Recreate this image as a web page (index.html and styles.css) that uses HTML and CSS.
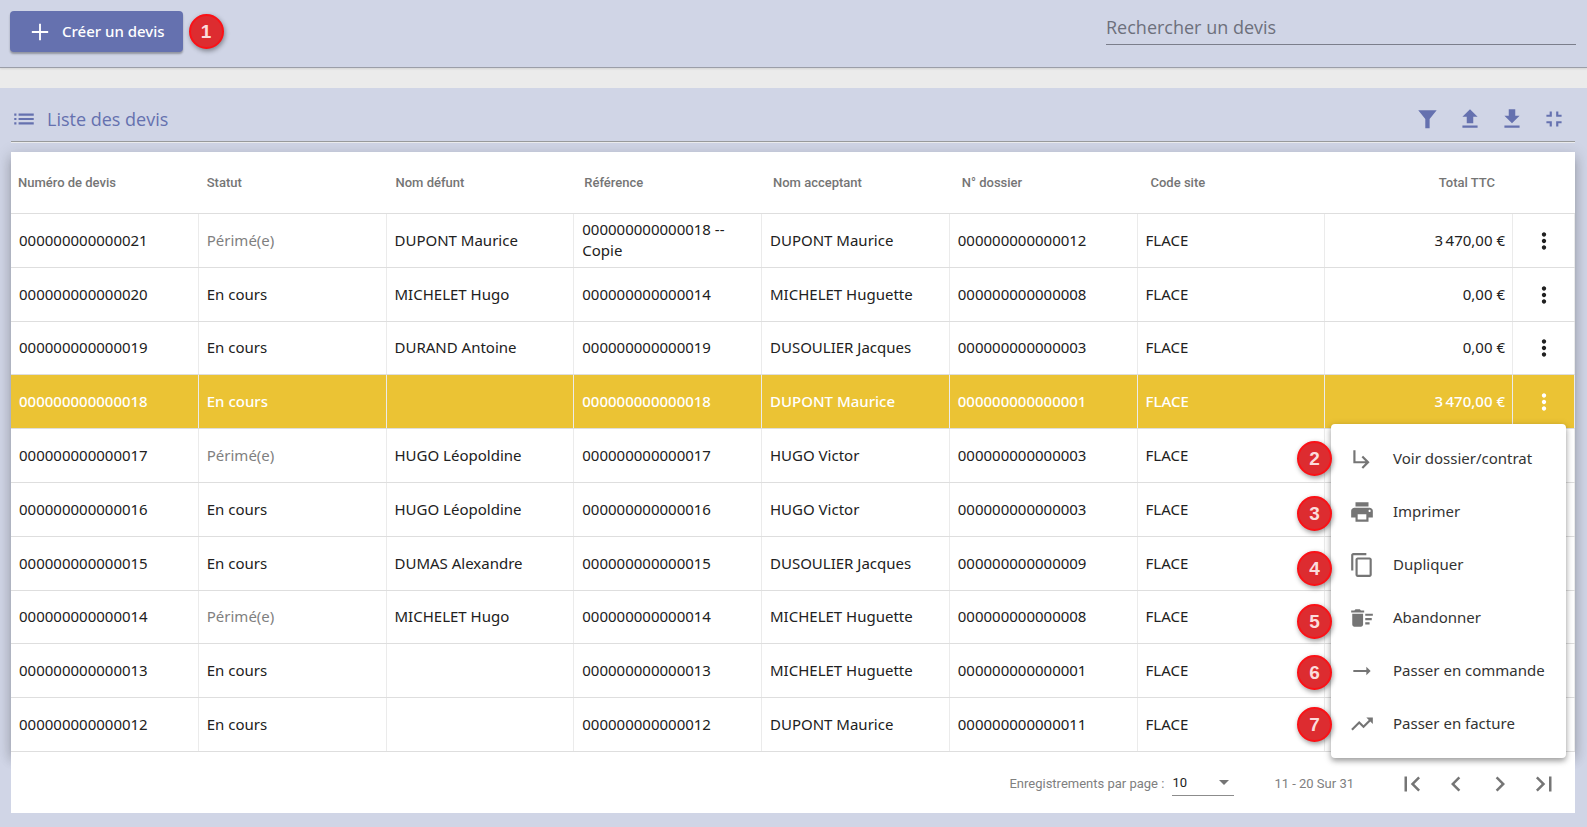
FILE: index.html
```
<!DOCTYPE html>
<html lang="fr">
<head>
  <meta charset="UTF-8">
  <meta name="viewport" content="width=device-width, initial-scale=1.0">
  <title>Liste des devis</title>
  <link rel="stylesheet" href="styles.css">
</head>
<body>

  <!-- Icônes -->
  <svg class="icon-defs" aria-hidden="true">
    <symbol id="i-more" viewBox="0 0 24 24"><path d="M12 8c1.100 0 2-.9 2-2s-.9-2-2-2-2 .9-2 2 .9 2 2 2zm0 2c-1.100 0-2 .9-2 2s.9 2 2 2 2-.9 2-2-.9-2-2-2zm0 6c-1.100 0-2 .9-2 2s.9 2 2 2 2-.9 2-2-.9-2-2-2z"/></symbol>
  </svg>

  <!-- Barre du haut -->
  <header class="topbar">
    <button type="button" class="create-button">
      <svg class="icon-plus" viewBox="0 0 24 24"><path d="M19 12.800h-6.200V19h-1.600v-6.200H5v-1.600h6.200V5h1.600v6.200H19z"/></svg>
      Créer un devis
    </button>
    <span class="badge">1</span>
    <input type="search" class="search" placeholder="Rechercher un devis" aria-label="Rechercher un devis">
  </header>

  <!-- Liste -->
  <main class="panel">
    <div class="panel-header">
      <svg class="icon" viewBox="0 0 24 24"><path d="M3 13h2v-2H3v2zm0 4h2v-2H3v2zm0-8h2V7H3v2zm4 4h14v-2H7v2zm0 4h14v-2H7v2zM7 7v2h14V7H7z"/></svg>
      <h1>Liste des devis</h1>
      <div class="tools">
        <button type="button" aria-label="Filtrer"><svg class="icon" viewBox="0 0 24 24"><path d="M3 4h17l-6.500 8v8.500h-4V12z"/></svg></button>
        <button type="button" aria-label="Importer"><svg class="icon" viewBox="0 0 24 24"><path d="M9 16h6v-6h4l-7-7-7 7h4v6zm-4 2h14v2H5v-2z"/></svg></button>
        <button type="button" aria-label="Exporter"><svg class="icon" viewBox="0 0 24 24"><path d="M19 9h-4V3H9v6H5l7 7 7-7zM5 18v2h14v-2H5z"/></svg></button>
        <button type="button" aria-label="Réduire"><svg class="icon" viewBox="0 0 24 24"><path d="M5 16h3v3h2v-5H5v2zm3-8H5v2h5V5H8v3zm6 11h2v-3h3v-2h-5v5zm2-11V5h-2v5h5V8h-3z"/></svg></button>
      </div>
    </div>

    <table class="quotes">
      <thead>
        <tr>
          <th>Numéro de devis</th>
          <th>Statut</th>
          <th>Nom défunt</th>
          <th>Référence</th>
          <th>Nom acceptant</th>
          <th>N° dossier</th>
          <th>Code site</th>
          <th class="total">Total TTC</th>
          <th></th>
        </tr>
      </thead>
      <tbody>
        <tr>
          <td>000000000000021</td><td class="expired">Périmé(e)</td><td>DUPONT Maurice</td><td>000000000000018 -- Copie</td><td>DUPONT Maurice</td><td>000000000000012</td><td>FLACE</td><td class="total">3&#8239;470,00 €</td>
          <td class="actions"><button type="button" aria-label="Actions"><svg class="icon"><use href="#i-more"/></svg></button></td>
        </tr>
        <tr>
          <td>000000000000020</td><td>En cours</td><td>MICHELET Hugo</td><td>000000000000014</td><td>MICHELET Huguette</td><td>000000000000008</td><td>FLACE</td><td class="total">0,00 €</td>
          <td class="actions"><button type="button" aria-label="Actions"><svg class="icon"><use href="#i-more"/></svg></button></td>
        </tr>
        <tr>
          <td>000000000000019</td><td>En cours</td><td>DURAND Antoine</td><td>000000000000019</td><td>DUSOULIER Jacques</td><td>000000000000003</td><td>FLACE</td><td class="total">0,00 €</td>
          <td class="actions"><button type="button" aria-label="Actions"><svg class="icon"><use href="#i-more"/></svg></button></td>
        </tr>
        <tr class="selected">
          <td>000000000000018</td><td>En cours</td><td></td><td>000000000000018</td><td>DUPONT Maurice</td><td>000000000000001</td><td>FLACE</td><td class="total">3&#8239;470,00 €</td>
          <td class="actions">
            <button type="button" aria-label="Actions"><svg class="icon"><use href="#i-more"/></svg></button>
            <!-- Menu contextuel -->
            <div class="menu">
              <button type="button"><svg class="icon" viewBox="0 0 24 24"><path d="M19 15l-6 6-1.420-1.420L15.170 16H4V4h2v10h9.170l-3.590-3.580L13 9l6 6z"/></svg>Voir dossier/contrat</button>
              <button type="button"><svg class="icon" viewBox="0 0 24 24"><path d="M19 8H5c-1.660 0-3 1.340-3 3v6h4v4h12v-4h4v-6c0-1.660-1.340-3-3-3zm-3 11H8v-5h8v5zm3-7c-.55 0-1-.45-1-1s.45-1 1-1 1 .45 1 1-.45 1-1 1zm-1-9H6v4h12V3z"/></svg>Imprimer</button>
              <button type="button"><svg class="icon" viewBox="0 0 24 24"><path d="M16 1H4c-1.100 0-2 .9-2 2v14h2V3h12V1zm3 4H8c-1.100 0-2 .9-2 2v14c0 1.100.9 2 2 2h11c1.100 0 2-.9 2-2V7c0-1.100-.9-2-2-2zm0 16H8V7h11v14z"/></svg>Dupliquer</button>
              <button type="button"><svg class="icon" viewBox="0 0 24 24"><path d="M15 16h4v2h-4zm0-8h7v2h-7zm0 4h6v2h-6zM3 18c0 1.100.9 2 2 2h6c1.100 0 2-.9 2-2V8H3v10zM14 5h-3l-1-1H6L5 5H2v2h12z"/></svg>Abandonner</button>
              <button type="button"><svg class="icon" viewBox="0 0 24 24"><path d="M16.010 11H4v2h12.010v3L20 12l-3.990-4z"/></svg>Passer en commande</button>
              <button type="button"><svg class="icon" viewBox="0 0 24 24"><path d="M16 6l2.290 2.290-4.880 4.880-4-4L2 16.590 3.410 18l6-6 4 4 6.300-6.290L22 12V6z"/></svg>Passer en facture</button>
              <span class="badge pin pin-2">2</span>
              <span class="badge pin pin-3">3</span>
              <span class="badge pin pin-4">4</span>
              <span class="badge pin pin-5">5</span>
              <span class="badge pin pin-6">6</span>
              <span class="badge pin pin-7">7</span>
            </div>
          </td>
        </tr>
        <tr>
          <td>000000000000017</td><td class="expired">Périmé(e)</td><td>HUGO Léopoldine</td><td>000000000000017</td><td>HUGO Victor</td><td>000000000000003</td><td>FLACE</td><td class="total"></td><td class="actions"></td>
        </tr>
        <tr>
          <td>000000000000016</td><td>En cours</td><td>HUGO Léopoldine</td><td>000000000000016</td><td>HUGO Victor</td><td>000000000000003</td><td>FLACE</td><td class="total"></td><td class="actions"></td>
        </tr>
        <tr>
          <td>000000000000015</td><td>En cours</td><td>DUMAS Alexandre</td><td>000000000000015</td><td>DUSOULIER Jacques</td><td>000000000000009</td><td>FLACE</td><td class="total"></td><td class="actions"></td>
        </tr>
        <tr>
          <td>000000000000014</td><td class="expired">Périmé(e)</td><td>MICHELET Hugo</td><td>000000000000014</td><td>MICHELET Huguette</td><td>000000000000008</td><td>FLACE</td><td class="total"></td><td class="actions"></td>
        </tr>
        <tr>
          <td>000000000000013</td><td>En cours</td><td></td><td>000000000000013</td><td>MICHELET Huguette</td><td>000000000000001</td><td>FLACE</td><td class="total"></td><td class="actions"></td>
        </tr>
        <tr>
          <td>000000000000012</td><td>En cours</td><td></td><td>000000000000012</td><td>DUPONT Maurice</td><td>000000000000011</td><td>FLACE</td><td class="total"></td><td class="actions"></td>
        </tr>
      </tbody>
    </table>

    <!-- Pagination -->
    <footer class="paginator">
      <label for="page-size">Enregistrements par page :</label>
      <div class="select-box">
        <select id="page-size">
          <option>5</option>
          <option selected>10</option>
          <option>20</option>
        </select>
      </div>
      <span class="range">11 - 20 Sur 31</span>
      <nav class="pages">
        <button type="button" aria-label="Première page"><svg viewBox="0 0 24 24"><path d="M18.410 16.590L13.820 12l4.590-4.590L17 6l-6 6 6 6zM6 6h2v12H6z"/></svg></button>
        <button type="button" aria-label="Page précédente"><svg viewBox="0 0 24 24"><path d="M15.410 7.410L14 6l-6 6 6 6 1.410-1.410L10.830 12z"/></svg></button>
        <button type="button" aria-label="Page suivante"><svg viewBox="0 0 24 24"><path d="M10 6L8.590 7.410 13.170 12l-4.580 4.590L10 18l6-6z"/></svg></button>
        <button type="button" aria-label="Dernière page"><svg viewBox="0 0 24 24"><path d="M5.590 7.410L10.180 12l-4.590 4.590L7 18l6-6-6-6zM16 6h2v12h-2z"/></svg></button>
      </nav>
    </footer>
  </main>

</body>
</html>
```
FILE: styles.css
```
/* === Base === */
* {
  box-sizing: border-box;
}
body {
  margin: 0;
  min-height: 100vh;
  display: flex;
  flex-direction: column;
  background: #ebebeb;
  color: #212121;
  font-family: "Noto Sans", sans-serif;
  font-size: 15px;
  line-height: 21px;
}
button {
  border: none;
  background: none;
  padding: 0;
  color: inherit;
  font: inherit;
  cursor: pointer;
}
svg {
  display: block;
  fill: currentColor;
}
.icon-defs {
  position: absolute;
  width: 0;
  height: 0;
}
.icon {
  width: 26px;
  height: 26px;
  flex: none;
}

/* === Barre du haut === */
.topbar {
  display: flex;
  align-items: flex-start;
  gap: 6px;
  height: 68px;
  padding: 11px 11px 0 10px;
  background: #d0d5e6;
  border-bottom: 1px solid #9b9ea8;
  box-shadow: 0 1px 2px rgba(0, 0, 0, 0.1);
}
.create-button {
  display: flex;
  align-items: center;
  gap: 8px;
  height: 41px;
  padding: 0 18px 0 16px;
  border-radius: 4px;
  background: #6571af;
  color: white;
  font-weight: 500;
  box-shadow: 0 2px 2px rgba(0, 0, 0, 0.3);
}
.icon-plus {
  width: 28px;
  height: 28px;
}
.badge {
  width: 35px;
  height: 35px;
  margin-top: 3px;
  border: 2px solid #fb1116;
  border-radius: 50%;
  background: #dd2c30;
  color: #fbdcdc;
  font: bold 19px/31px "Liberation Sans", Arial, sans-serif;
  text-align: center;
  box-shadow: 1px 2px 5px rgba(0, 0, 0, 0.4);
}
.search {
  width: 470px;
  height: 34px;
  margin-left: auto;
  padding: 0 0 2px;
  border: none;
  border-bottom: 1px solid #7b7e8b;
  background: transparent;
  font: 18px "Open Sans", sans-serif;
  outline: none;
}
.search::placeholder {
  color: #6d707c;
}

/* === Liste === */
.panel {
  flex: 1;
  display: flex;
  flex-direction: column;
  margin-top: 20px;
  padding: 10px 12px 14px 11px;
  background: #d0d5e6;
}
.panel-header {
  display: flex;
  align-items: center;
  gap: 10px;
  height: 44px;
  margin-bottom: 10px;
  padding-bottom: 2px;
  border-bottom: 1px solid #999b9c;
  box-shadow: 0 1px 0 #ecedef;
  color: #6571af;
}
.panel-header h1 {
  margin: 0;
  font: 18px "Open Sans", sans-serif;
}
.tools {
  display: flex;
  gap: 16px;
  margin-left: auto;
  padding-right: 8px;
}

/* === Tableau === */
.quotes {
  flex: 1;
  display: flex;
  flex-direction: column;
  background: white;
  box-shadow: 0 5px 5px -3px rgba(0, 0, 0, 0.2), 0 8px 10px 1px rgba(0, 0, 0, 0.14), 0 3px 14px 2px rgba(0, 0, 0, 0.12);
}
.quotes thead {
  display: block;
}
.quotes tr {
  display: grid;
  grid-template-columns: repeat(8, 1fr) 62px;
  border-bottom: 1px solid #dedede;
}
.quotes thead tr {
  grid-template-columns: repeat(8, 1fr) 47px;
  height: 62px;
  padding-left: 7px;
  align-items: center;
}
.quotes th {
  padding: 0;
  color: #757575;
  font: 500 13px/20px Roboto, sans-serif;
  text-align: left;
}
.quotes th.total {
  padding-right: 33px;
}
.quotes tbody {
  flex: 1;
  display: grid;
  grid-auto-rows: 1fr;
}
.quotes td {
  display: flex;
  align-items: center;
  padding: 0 7px 0 8px;
  border-right: 1px solid #ebebeb;
}
.quotes .total {
  justify-content: flex-end;
  text-align: right;
}
.quotes .expired {
  color: #7f7f7f;
}
.quotes .actions {
  justify-content: center;
  padding: 1px 0 0;
}
.quotes .selected {
  position: relative;
  background: #ebc334;
  color: white;
  font-weight: 500;
}

/* === Menu contextuel === */
.menu {
  position: absolute;
  z-index: 1;
  top: 49px;
  right: 9px;
  width: 235px;
  padding: 8px 0;
  border-radius: 4px;
  background: white;
  font-weight: 400;
  box-shadow: 0 3px 5px rgba(0, 0, 0, 0.25), 0 2px 8px rgba(0, 0, 0, 0.2);
}
.menu button {
  display: flex;
  align-items: center;
  gap: 18px;
  width: 100%;
  height: 53px;
  padding: 0 18px;
  color: #333;
  white-space: nowrap;
}
.menu .icon {
  color: #757575;
}

/* Pastilles numérotées */
.pin {
  position: absolute;
  left: -34px;
  margin: 0;
}
.pin-2 { top: 17px; }
.pin-3 { top: 72px; }
.pin-4 { top: 127px; }
.pin-5 { top: 180px; }
.pin-6 { top: 231px; }
.pin-7 { top: 283px; }

/* === Pagination === */
.paginator {
  position: relative; /* passe devant l'ombre du tableau */
  display: flex;
  align-items: center;
  justify-content: flex-end;
  height: 61px;
  padding: 2px 16px 0 0;
  background: white;
  color: #808080;
  font: 13px/20px Roboto, sans-serif;
}
.select-box {
  position: relative;
  width: 62px;
  margin: 0 40px 0 8px;
  border-bottom: 1px solid #8c8c8c;
}
.select-box::after {
  content: "";
  position: absolute;
  right: 5px;
  top: 9px;
  border: 5px solid transparent;
  border-top-color: #757575;
  border-bottom: none;
  pointer-events: none;
}
.select-box select {
  width: 100%;
  height: 24px;
  padding: 0;
  border: none;
  appearance: none;
  background: transparent;
  color: #212121;
  font: inherit;
}
.pages {
  display: flex;
  gap: 14px;
  margin-left: 43px;
  color: #757575;
}
.pages svg {
  width: 30px;
  height: 30px;
}
```
